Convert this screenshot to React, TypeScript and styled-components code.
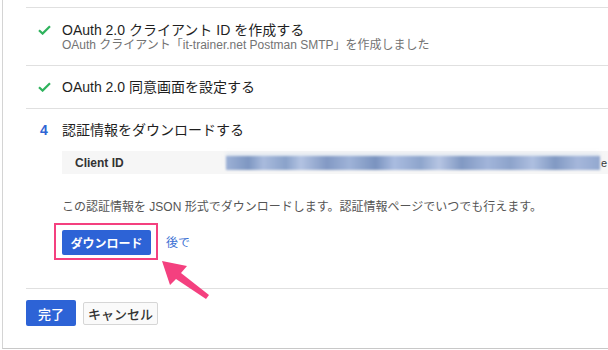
import React, { ReactElement } from "react";
import styled, { createGlobalStyle } from "styled-components";

const GlobalStyle = createGlobalStyle`
  html, body {
    margin: 0;
    padding: 0;
    background: #ffffff;
  }
  body {
    font-family: "Liberation Sans", "Noto Sans CJK JP", sans-serif;
    color: #212121;
  }
`;

const Frame = styled.div`
  margin-left: 2px;
  width: 605px;
  height: 348px;
  border-left: 1px solid #d4d4d4;
  border-bottom: 1px solid #c8c8c8;
  padding-left: 23px;
  overflow: hidden;
`;

const TopGap = styled.div`
  height: 7px;
`;

const Step = styled.div<{ $pt: number; $pb: number }>`
  position: relative;
  display: grid;
  grid-template-columns: 36px 1fr;
  border-top: 1px solid #e0e0e0;
  padding-top: ${(p) => p.$pt}px;
  padding-bottom: ${(p) => p.$pb}px;
  width: 620px;
`;

const Marker = styled.div`
  padding-left: 12px;
  height: 18px;
  display: flex;
  align-items: center;
`;

const StepNumber = styled.span`
  color: #2f65d4;
  font-size: 14px;
  font-weight: bold;
  padding-left: 2px;
`;

const Body = styled.div`
  display: flex;
  flex-direction: column;
  align-items: flex-start;
`;

const Title = styled.div`
  font-size: 14px;
  line-height: 18px;
  color: #1f1f1f;
`;

const Subtitle = styled.div`
  font-size: 12px;
  line-height: 14px;
  margin-top: -1px;
  color: #737373;
`;

const CredentialRow = styled.div`
  margin-top: 12px;
  height: 23px;
  width: 560px;
  background: #f6f6f6;
  display: flex;
  align-items: center;
  padding-left: 13px;
`;

const CredentialLabel = styled.span`
  width: 151px;
  flex-shrink: 0;
  font-size: 12px;
  font-weight: bold;
  color: #333;
`;

const Blurred = styled.div`
  width: 374px;
  height: 14px;
  filter: blur(0.8px);
  background:
    linear-gradient(90deg,
      #9db1d6 0%, #7e97c2 6%, #a9bbdd 10%, #8aa2ca 16%, #b3c3e2 20%,
      #8299c4 27%, #9fb3d8 33%, #7a93bf 40%, #aabce0 45%, #8ea5cc 52%,
      #b6c5e3 57%, #8199c3 63%, #a2b5da 70%, #8da3cb 76%, #aebfe0 82%,
      #8199c3 88%, #a5b7db 94%, #93a8cf 100%);
  box-shadow: 0 -3px 3px rgba(190, 205, 230, 0.35);
`;

const Tail = styled.span`
  font-size: 11px;
  color: #333;
  margin-left: 1px;
`;

const Description = styled.div`
  margin-top: 25px;
  font-size: 12px;
  line-height: 16px;
  color: #555;
`;

const ActionRow = styled.div`
  margin-top: 8px;
  margin-left: -8px;
  display: flex;
  align-items: center;
  gap: 8px;
`;

const Highlight = styled.div`
  position: relative;
  border: 2px solid #f4407f;
  padding: 5px 5px 3px 6px;
`;

const PrimaryButton = styled.button<{ $w: number; $h: number; $weight: number }>`
  width: ${(p) => p.$w}px;
  height: ${(p) => p.$h}px;
  background: #2d63d6;
  color: #ffffff;
  border: none;
  border-radius: 2px;
  font-family: inherit;
  font-size: ${(p) => (p.$weight > 600 ? 12 : 13)}px;
  font-weight: ${(p) => p.$weight};
  padding: 0;
  display: block;
`;

const SecondaryButton = styled.button`
  width: 75px;
  height: 23px;
  background: #fafafa;
  color: #333;
  border: 1px solid #d6d6d6;
  border-radius: 2px;
  font-family: inherit;
  font-size: 13px;
  font-weight: 500;
  padding: 0;
`;

const LaterLink = styled.a`
  font-size: 12px;
  color: #3a6fd3;
  text-decoration: none;
`;

const Arrow = styled.svg`
  position: absolute;
  left: 94px;
  top: 29px;
  overflow: visible;
`;

const Footer = styled.div`
  border-top: 1px solid #e0e0e0;
  padding-top: 11px;
  display: flex;
  align-items: center;
  gap: 7px;
  width: 620px;
`;

const Check = (): ReactElement => (
  <svg width="13" height="10" viewBox="0 0 13 10">
    <path
      d="M1 5.2 L4.6 8.6 L12 1.2"
      fill="none"
      stroke="#2fb35d"
      strokeWidth="2.2"
    />
  </svg>
);

const App = (): ReactElement => {
  return (
    <>
      <GlobalStyle />
      <Frame>
        <TopGap />
        <Step $pt={13} $pb={13}>
          <Marker>
            <Check />
          </Marker>
          <Body>
            <Title>OAuth 2.0 クライアント ID を作成する</Title>
            <Subtitle>
              OAuth クライアント「it-trainer.net Postman SMTP」を作成しました
            </Subtitle>
          </Body>
        </Step>
        <Step $pt={12} $pb={12}>
          <Marker>
            <Check />
          </Marker>
          <Body>
            <Title>OAuth 2.0 同意画面を設定する</Title>
          </Body>
        </Step>
        <Step $pt={12} $pb={28}>
          <Marker>
            <StepNumber>4</StepNumber>
          </Marker>
          <Body>
            <Title>認証情報をダウンロードする</Title>
            <CredentialRow>
              <CredentialLabel>Client ID</CredentialLabel>
              <Blurred />
              <Tail>e</Tail>
            </CredentialRow>
            <Description>
              この認証情報を JSON 形式でダウンロードします。認証情報ページでいつでも行えます。
            </Description>
            <ActionRow>
              <Highlight>
                <PrimaryButton $w={89} $h={25} $weight={700}>
                  ダウンロード
                </PrimaryButton>
                <Arrow width="65" height="50" viewBox="0 0 65 50">
                  <polygon
                    points="12,7 20,31 26,25 56,45 59,41 31,19 37,12"
                    fill="#f4407f"
                  />
                </Arrow>
              </Highlight>
              <LaterLink href="#">後で</LaterLink>
            </ActionRow>
          </Body>
        </Step>
        <Footer>
          <PrimaryButton $w={50} $h={26} $weight={500}>
            完了
          </PrimaryButton>
          <SecondaryButton>キャンセル</SecondaryButton>
        </Footer>
      </Frame>
    </>
  );
};

export default App;
